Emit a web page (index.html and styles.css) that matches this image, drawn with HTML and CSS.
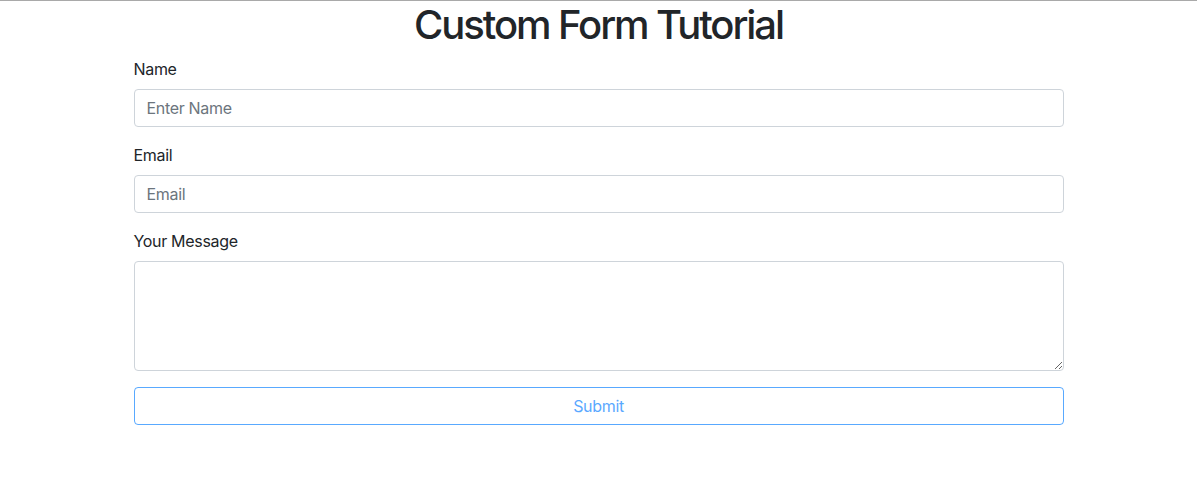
FILE: index.html
```html
<!DOCTYPE html>
<html lang="en">
<head>
<meta charset="utf-8">
<title>Custom Form Tutorial</title>
<link rel="stylesheet" href="styles.css">
</head>
<body>
<div class="topline"></div>
<div class="container">
  <h1 class="title">Custom Form Tutorial</h1>
  <form class="form">
    <div class="form-group">
      <label class="label" for="name">Name</label>
      <input class="control" id="name" type="text" placeholder="Enter Name">
    </div>
    <div class="form-group">
      <label class="label" for="email">Email</label>
      <input class="control" id="email" type="email" placeholder="Email">
    </div>
    <div class="form-group">
      <label class="label" for="msg">Your Message</label>
      <textarea class="control textarea" id="msg" rows="4"></textarea>
    </div>
    <button class="btn" type="submit" disabled>Submit</button>
  </form>
</div>
</body>
</html>
```
FILE: styles.css
```css
* { box-sizing: border-box; }
html, body { margin: 0; padding: 0; }
body {
  font-family: Inter, "Liberation Sans", Arial, sans-serif;
  font-size: 16px;
  line-height: 1.5;
  letter-spacing: -0.02em;
  color: #212529;
  background: #fff;
}
.topline {
  height: 1px;
  background: #a9a9a9;
}
.container {
  max-width: 960px;
  margin: 0 auto;
  padding: 0 15px;
}
.title {
  margin: 0 0 8px;
  font-size: 40px;
  font-weight: 500;
  line-height: 1.2;
  letter-spacing: -0.052em;
  text-align: center;
}
.form { margin: 0; }
.form-group { margin-bottom: 16px; }
.label {
  display: inline-block;
  margin-bottom: 8px;
}
.control {
  display: block;
  width: 100%;
  height: 38px;
  padding: 6px 12px;
  font-family: inherit;
  font-size: 16px;
  line-height: 1.5;
  letter-spacing: inherit;
  color: #495057;
  background: #fff;
  border: 1px solid #ced4da;
  border-radius: 4px;
  margin: 0;
}
.control::placeholder { color: #6c757d; opacity: 1; }
.textarea {
  height: auto;
  resize: vertical;
  overflow: auto;
}
.btn {
  display: block;
  width: 100%;
  padding: 6px 12px;
  font-family: inherit;
  font-size: 16px;
  line-height: 1.5;
  letter-spacing: inherit;
  color: #007bff;
  background: transparent;
  border: 1px solid #007bff;
  border-radius: 4px;
  opacity: 0.65;
  text-align: center;
}
```
